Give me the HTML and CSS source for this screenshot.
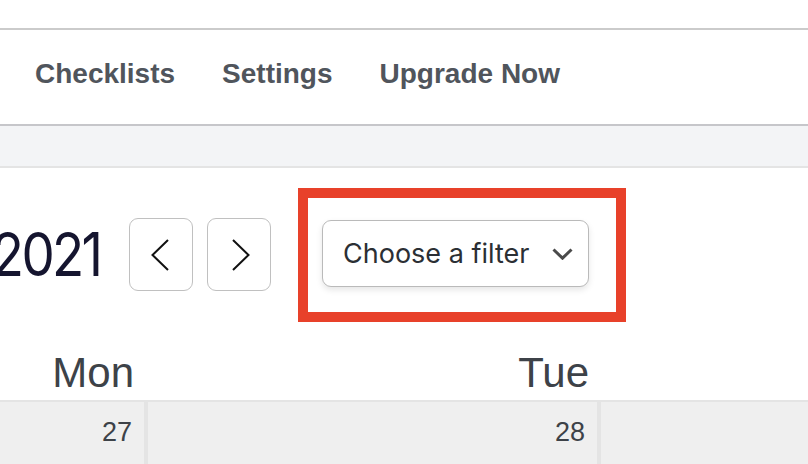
FILE: index.html
```html
<!DOCTYPE html>
<html>
<head>
<meta charset="utf-8">
<link rel="stylesheet" href="styles.css">
</head>
<body>
<div class="topbar"></div>
<nav class="nav">
  <a class="nav-item">Checklists</a>
  <a class="nav-item">Settings</a>
  <a class="nav-item">Upgrade Now</a>
</nav>
<div class="band"></div>
<div class="toolbar">
  <div class="title"><span>2021</span></div>
  <button class="nav-btn prev" aria-label="Previous">
    <svg width="18" height="32" viewBox="0 0 18 32"><polyline points="17,1 1.5,16 17,31" fill="none" stroke="#111" stroke-width="2"/></svg>
  </button>
  <button class="nav-btn next" aria-label="Next">
    <svg width="18" height="32" viewBox="0 0 18 32"><polyline points="1,1 16.5,16 1,31" fill="none" stroke="#111" stroke-width="2"/></svg>
  </button>
  <div class="highlight">
    <div class="select">
      <span class="select-label">Choose a filter</span>
      <svg width="21" height="12" viewBox="0 0 21 12"><polyline points="1.5,1.5 10.5,10.2 19.5,1.5" fill="none" stroke="#4a4a4a" stroke-width="3"/></svg>
    </div>
  </div>
</div>
<div class="cal-head">
  <div class="day-name">Mon</div>
  <div class="day-name tue">Tue</div>
  <div class="day-name"></div>
</div>
<div class="cal-row">
  <div class="cell">27</div>
  <div class="cell">28</div>
  <div class="cell"></div>
</div>
</body>
</html>
```

FILE: styles.css
```css
html, body {
  margin: 0;
  padding: 0;
  background: #fff;
  width: 808px;
  height: 464px;
  overflow: hidden;
}
body {
  font-family: "Liberation Sans", Arial, sans-serif;
}
.topbar {
  height: 28px;
  border-bottom: 2px solid #cbcbcb;
}
.nav {
  height: 88px;
  padding-bottom: 6px;
  display: flex;
  align-items: center;
  gap: 47px;
  padding-left: 35px;
  border-bottom: 2px solid #c6c6ca;
}
.nav-item {
  font-size: 28px;
  font-weight: 700;
  line-height: 32px;
  color: #50555c;
  white-space: nowrap;
}
.band {
  height: 40px;
  background: #f3f4f6;
  border-bottom: 2px solid #e4e4e4;
}
.toolbar {
  display: flex;
  align-items: center;
  padding-top: 20px;
  height: 134px;
}
.title {
  width: 103px;
  flex: none;
  display: flex;
  justify-content: flex-end;
  overflow: hidden;
  white-space: nowrap;
  font-family: Inter, "Liberation Sans", sans-serif;
  font-size: 60px;
  line-height: 70px;
  letter-spacing: -3px;
  color: #15152f;
  margin-top: -2px;
}
.title span {
  flex: none;
  margin-right: 3px;
  display: inline-block;
  transform: scaleX(0.88);
  transform-origin: right center;
}
.nav-btn {
  width: 64px;
  height: 73px;
  flex: none;
  margin: 0 0 1px 0;
  padding: 0;
  border: 1.5px solid #c0c0c0;
  border-radius: 9px;
  background: #fff;
  display: flex;
  align-items: center;
  justify-content: center;
}
.prev { margin-left: 26px; padding-right: 3px; }
.next { margin-left: 14px; padding-left: 3px; }
.highlight {
  margin-left: 27px;
  border: 10px solid #e8412a;
  width: 308px;
  height: 114px;
  box-sizing: content-box;
  display: flex;
  align-items: flex-start;
  padding: 0;
}
.select {
  margin: 22px 0 0 14px;
  width: 267px;
  height: 67px;
  box-sizing: border-box;
  border: 1.5px solid #bababa;
  border-radius: 9px;
  background: #fff;
  box-shadow: 0 3px 6px rgba(0, 0, 0, 0.10);
  display: flex;
  align-items: center;
  padding: 0 15px 0 20px;
  gap: 20px;
}
.select-label {
  font-family: Inter, "Liberation Sans", sans-serif;
  font-size: 27px;
  color: #2b2f34;
  white-space: nowrap;
  flex: 1;
}
.cal-head,
.cal-row {
  display: grid;
  grid-template-columns: 144px 449px 1fr;
  column-gap: 4px;
}
.cal-head {
  height: 78px;
}
.day-name {
  align-self: end;
  text-align: right;
  font-size: 42px;
  line-height: 1;
  color: #3d4248;
  padding: 0 10px 6px 0;
}
.day-name.tue {
  padding-right: 8px;
}
.cal-row {
  background: #e4e4e4;
  border-top: 2px solid #e4e4e4;
  height: 70px;
}
.cell {
  background: #efefef;
  text-align: right;
  font-size: 27px;
  line-height: 1;
  color: #3d4248;
  padding: 17px 12px 0 0;
}
```
